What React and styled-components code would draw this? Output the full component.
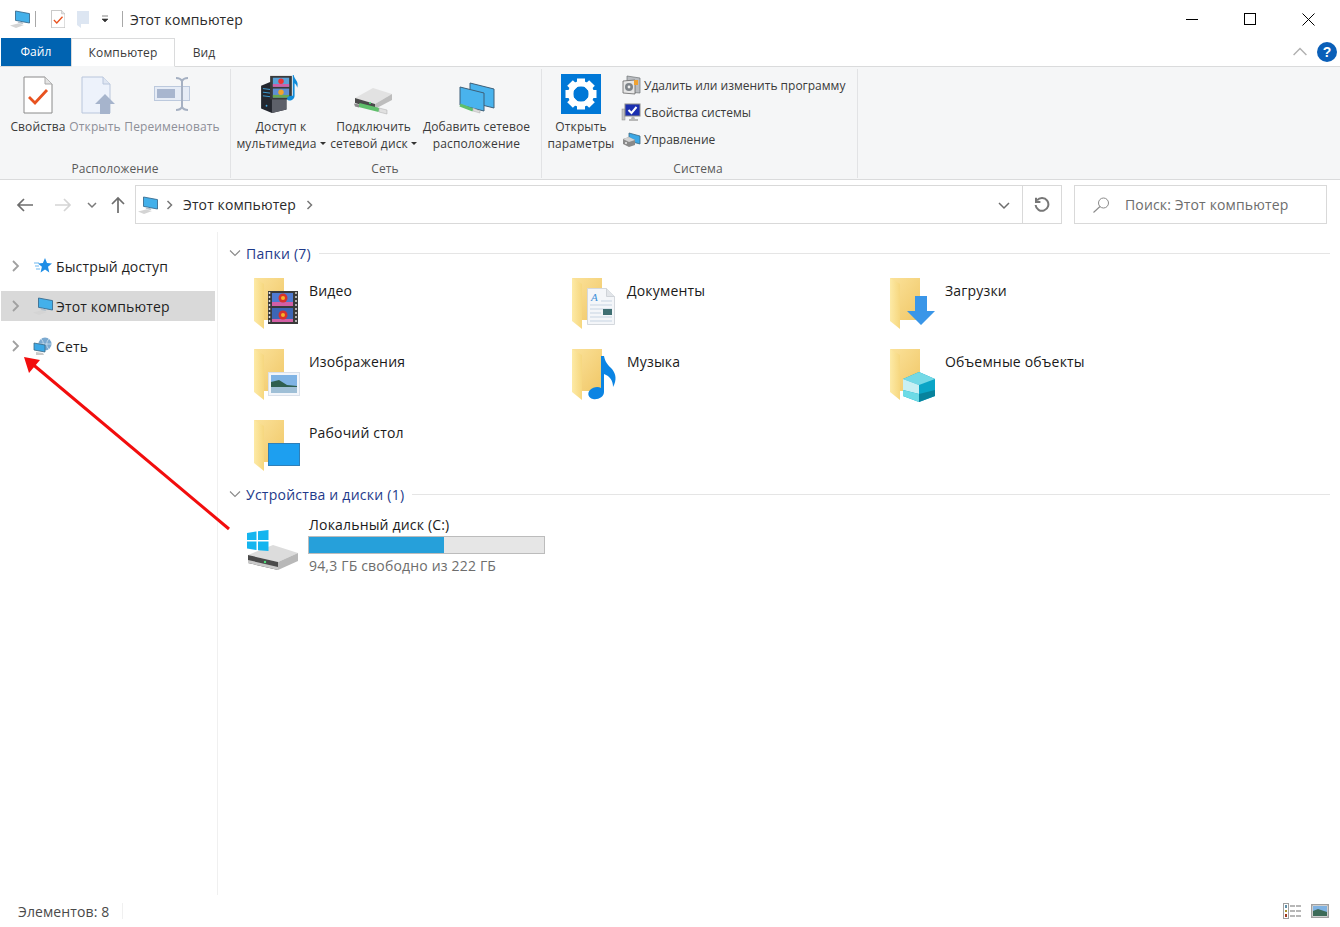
import React from 'react';
import styled, { createGlobalStyle } from 'styled-components';

const Global = createGlobalStyle`
  html, body { margin: 0; padding: 0; background: #fff; }
  body { font-family: "Open Sans", "Noto Sans", sans-serif; color: #1a1a1a; letter-spacing: 0.1px; }
  * { box-sizing: border-box; }
`;

const Window = styled.div`
  position: relative; width: 1340px; height: 927px; overflow: hidden;
  display: flex; flex-direction: column; background: #fff;
`;

/* ---------- title bar ---------- */
const TitleBar = styled.div`
  height: 38px; display: flex; align-items: center; padding: 0 2px 0 10px; flex: none;
`;
const QuickSep = styled.i`
  display: block; width: 1px; height: 16px; background: #a8a8a8; margin: 0 ${p => p.$r}px 0 ${p => p.$l}px;
`;
const QuickGap = styled.i` display: block; width: 11.6px; `;
const Title = styled.span` font-size: 14px; color: #2b2b2b; `;
const Spacer = styled.div` flex: 1; `;
const WinButtons = styled.div` display: flex; align-items: center; height: 38px; `;
const WinButton = styled.div`
  width: 58.5px; height: 38px; display: flex; align-items: center; justify-content: center;
`;

/* ---------- tabs ---------- */
const TabRow = styled.div`
  height: 28px; flex: none; display: flex; align-items: flex-start; padding-left: 1px; position: relative; z-index: 1;
`;
const FileTab = styled.div`
  width: 70px; height: 28px; padding-bottom: 1px; background: #0063b1; color: #fff; font-size: 12px; letter-spacing: 0.1px;
  display: flex; align-items: center; justify-content: center;
`;
const Tab = styled.div`
  width: ${p => p.$w}px; height: 29px; padding-bottom: 1px; font-size: 12px; letter-spacing: 0.15px; color: #3b3b3b;
  display: flex; align-items: center; justify-content: center;
  border: 1px solid ${p => (p.$active ? '#dadbdc' : 'transparent')};
  border-bottom: 1px solid ${p => (p.$active ? '#f5f6f7' : 'transparent')};
  background: ${p => (p.$active ? '#fff' : 'transparent')};
`;
const HelpArea = styled.div`
  margin-left: auto; height: 28px; display: flex; align-items: center; gap: 10px; padding-right: 3px;
`;

/* ---------- ribbon ---------- */
const Ribbon = styled.div`
  height: 114px; flex: none; background: #f5f6f7; display: flex; padding-top: 1px;
  border-top: 1px solid #dadbdc; border-bottom: 1px solid #dadbdc;
`;
const Group = styled.div`
  width: ${p => p.$w}px; height: 109px; margin-top: 1px; flex: none; padding-left: ${p => p.$pad}px;
  border-right: 1px solid #e2e3e5; display: flex; flex-direction: column;
`;
const GroupBody = styled.div` flex: 1; display: flex; `;
const GroupLabel = styled.div`
  height: 16px; margin-left: ${p => -p.$pad}px; padding-right: ${p => p.$nudge || 0}px; margin-bottom: 1px; text-align: center;
  font-size: 12px; letter-spacing: 0.1px; line-height: 16px; color: #5a5a5a;
`;
const RibbonButton = styled.div`
  width: ${p => p.$w}px; display: flex; flex-direction: column; align-items: center;
  font-size: 12px; letter-spacing: 0.12px; line-height: 17px; white-space: nowrap; text-align: center;
  color: ${p => (p.$off ? '#8d8f98' : '#3a3a3a')};
`;
const BigIcon = styled.div`
  height: 49px; width: 100%; display: flex; justify-content: center; align-items: flex-start;
  padding-top: ${p => p.$top}px; padding-left: ${p => p.$left || 0}px;
`;
const Caret = styled.i`
  display: inline-block; width: 0; height: 0; margin-left: 3px; vertical-align: 3px;
  border-left: 3px solid transparent; border-right: 3px solid transparent; border-top: 3px solid #333;
`;
const SmallList = styled.div` display: flex; flex-direction: column; padding: 6px 0 0 5px; gap: 7px; `;
const SmallRow = styled.div`
  height: 20px; display: flex; align-items: center; gap: 3px; font-size: 12px; letter-spacing: 0;
  white-space: nowrap; color: #3a3a3a;
`;
const SmallIcon = styled.div` width: 20px; flex: none; display: flex; justify-content: center; `;

/* ---------- address bar ---------- */
const AddressRow = styled.div`
  height: 52px; flex: none; display: flex; padding: 5px 13px 0 0;
`;
const NavButtons = styled.div`
  width: 135px; height: 39px; flex: none; display: flex; align-items: center;
`;
const NavSlot = styled.div`
  width: ${p => p.$w}px; display: flex; justify-content: center; align-items: center; flex: none;
`;
const AddressBox = styled.div`
  width: 927px; height: 39px; flex: none; border: 1px solid #d9d9d9; display: flex; align-items: center; padding-left: 2px;
  font-size: 14px; color: #2b2b2b;
`;
const CrumbChevron = styled.div` margin-left: 6px; display: flex; `;
const Crumb = styled.span` margin: 0 8px 0 7px; `;
const AddrEnd = styled.div` margin-left: auto; display: flex; height: 100%; align-items: center; `;
const AddrDrop = styled.div`
  width: 38px; height: 100%; display: flex; align-items: center; justify-content: center; border-right: 1px solid #d9d9d9;
`;
const AddrRefresh = styled.div`
  width: 38px; height: 100%; display: flex; align-items: center; justify-content: center;
`;
const SearchBox = styled.div`
  width: 253px; height: 39px; margin-left: 12px; flex: none; border: 1px solid #d9d9d9; display: flex; align-items: center;
  padding-left: 17px; gap: 15px; font-size: 14px; letter-spacing: 0.15px; color: #6d6d6d;
`;

/* ---------- main ---------- */
const Main = styled.div` flex: 1; display: flex; min-height: 0; `;
const Sidebar = styled.nav`
  width: 218px; flex: none; border-right: 1px solid #f0f0f0; padding: 19px 2px 0 1px;
  display: flex; flex-direction: column; gap: 10px;
`;
const NavRow = styled.div`
  width: 214px; height: 30px; display: flex; align-items: center; font-size: 14px; letter-spacing: 0.15px; color: #1f1f1f;
  background: ${p => (p.$selected ? '#d9d9d9' : 'transparent')};
`;
const NavChevron = styled.div` width: 29px; flex: none; padding-left: 9px; display: flex; `;
const NavIcon = styled.div` width: 26px; flex: none; display: flex; justify-content: center; `;

const Content = styled.main` flex: 1; padding: 12px 10px 0 11px; min-width: 0; `;
const SectionHead = styled.div`
  height: 18px; display: flex; align-items: center; font-size: 14px; letter-spacing: 0.25px; color: #1e3a8a;
`;
const SectionChevron = styled.div` width: 17px; flex: none; display: flex; `;
const SectionRule = styled.div` flex: 1; height: 1px; background: #e5e5e5; margin-left: 8px; `;
const FolderGrid = styled.div`
  display: grid; grid-template-columns: repeat(3, 318px); grid-auto-rows: 54px; row-gap: 17px; padding: 15px 0 12px 25px;
`;
const FolderItem = styled.div`
  display: flex; gap: 9px; font-size: 14px; letter-spacing: 0.18px; color: #1a1a1a; line-height: 20px;
`;
const FolderLabel = styled.div` padding-top: 4px; `;
const DriveItem = styled.div` display: flex; padding: 12px 0 0 18px; gap: 10px; `;
const DiskSlot = styled.div` padding-top: 14px; display: flex; `;
const DriveInfo = styled.div` width: 237px; font-size: 14px; letter-spacing: 0.18px; line-height: 20px; color: #1a1a1a; `;
const DriveBar = styled.div`
  height: 18px; margin: 1px 0 2px -1px; width: 237px; background: #e6e6e6; border: 1px solid #bcbcbc;
`;
const DriveFill = styled.div` height: 100%; background: #26a0da; `;
const DriveMeta = styled.div` color: #6d6d6d; margin-top: 1px; white-space: nowrap; `;

/* ---------- status ---------- */
const StatusBar = styled.div`
  height: 32px; flex: none; display: flex; align-items: center; padding: 0 11px 0 18px; font-size: 14px; color: #4a4a4a;
`;
const StatusSep = styled.i` display: block; width: 1px; height: 16px; background: #f0f0f0; margin-left: 13px; `;
const ViewIcons = styled.div` margin-left: auto; display: flex; align-items: center; gap: 10px; `;

const ArrowOverlay = styled.svg` position: absolute; left: 0; top: 0; pointer-events: none; `;

/* ---------- icons ---------- */
const Pc = () => (
  <svg width="20" height="18" viewBox="0 0 20 18">
    <path d="M0 15.5l8-2 6 1.5-8 3z" fill="#d4d4d4" />
    <path d="M5.5 1l14 2.6v9.4l-14-2.6z" fill="#43b0ea" stroke="#3b6d91" strokeWidth=".9" />
    <path d="M9 11.5l5 1-1.5 1.5-5-1z" fill="#b5c1cb" />
  </svg>
);
const CheckDoc = ({ s = 1 }) => (
  <svg width={30 * s} height={38 * s} viewBox="0 0 30 38">
    <path d="M1 1h21l7 7v29H1z" fill="#fff" stroke="#8a8a8a" strokeWidth="1" />
    <path d="M22 1v7h7" fill="#e4e4e4" stroke="#a9a9a9" strokeWidth="1" />
    <path d="M6 21l6 6 12-13" fill="none" stroke="#e8521f" strokeWidth="2.8" />
  </svg>
);
const OpenIcon = () => (
  <svg width="36" height="40" viewBox="0 0 36 40">
    <path d="M1 1h21l7 7v29H1z" fill="#edf2fb" stroke="#b9c6dc" />
    <path d="M22 1v7h7" fill="#dfe6f2" stroke="#b9c6dc" />
    <path d="M24 18l10 10h-5v10h-10V28h-5z" fill="#a6b4cc" />
  </svg>
);
const RenameIcon = () => (
  <svg width="36" height="34" viewBox="0 0 36 34">
    <rect x=".5" y="9.5" width="35" height="14" fill="#e6ecf6" stroke="#bcc9dd" />
    <rect x="3" y="12" width="18" height="9" fill="#a8b6cf" />
    <path d="M22 1c4 0 5 1 6 3 1-2 2-3 6-3M28 4v26M22 33c4 0 5-1 6-3 1 2 2 3 6 3" fill="none" stroke="#a5b0c2" strokeWidth="2" />
  </svg>
);
const MediaIcon = () => (
  <svg width="40" height="38" viewBox="0 0 44 42">
    <path d="M0 12l12-5 16 4v27l-16 4L0 37z" fill="#23262e" />
    <path d="M12 7l16 4v27l-16 4z" fill="#5d6069" />
    <path d="M2 15l8 1M2 19l8 1M2 23l8 1" stroke="#3fa5df" strokeWidth="1" />
    <circle cx="6" cy="34" r="1" fill="#3fa5df" />
    <rect x="10" y="1" width="24" height="26" fill="#3a3a3a" />
    <rect x="13" y="3" width="18" height="10" fill="#5aa2d8" />
    <rect x="13" y="15" width="18" height="10" fill="#5f8fd2" />
    <rect x="13" y="10" width="18" height="3" fill="#d35fa5" />
    <rect x="13" y="22" width="18" height="3" fill="#6aa84f" />
    <circle cx="22" cy="7" r="3" fill="#e33" />
    <circle cx="22" cy="19" r="3" fill="#f1a32a" />
    <path d="M36 0c1 6 6 6 4 14-1-4-2-4-3-5v14c0 4-4 6-7 5-3-2 0-6 5-5V0z" fill="#0f8bd9" />
  </svg>
);
const NetDriveIcon = () => (
  <svg width="42" height="28" viewBox="0 0 42 28">
    <path d="M2 11L20 1l19 6-17 10z" fill="#e2e2e2" />
    <path d="M2 11l20 6v5L2 16z" fill="#4a4a4a" />
    <path d="M22 17L39 7v6L22 22z" fill="#bdbdbd" />
    <circle cx="17" cy="16" r="1" fill="#4fe07a" />
    <path d="M6 18l20 5" stroke="#5fbf6b" strokeWidth="4" />
    <path d="M1 16.5l5 1v3l-4-1z" fill="#8b8b8b" />
    <path d="M26 21l8 2v4l-8-2z" fill="#e0e0e0" stroke="#aaa" strokeWidth=".5" />
  </svg>
);
const NetLocIcon = () => (
  <svg width="36" height="32" viewBox="0 0 36 32">
    <path d="M11 1l24 6v19l-24-6z" fill="#49b3ed" stroke="#3d5f78" />
    <path d="M1 5l24 6v18L1 23z" fill="#49b3ed" stroke="#3d5f78" />
    <path d="M1 23l13 5" stroke="#5fbf6b" strokeWidth="3" />
    <path d="M14 26l7 3v2l-7-2z" fill="#ddd" stroke="#aaa" strokeWidth=".5" />
  </svg>
);
const GearTile = () => (
  <svg width="40" height="40" viewBox="0 0 40 40">
    <rect width="40" height="40" fill="#0078d7" />
    <g fill="#fff">
      {[0, 45, 90, 135, 180, 225, 270, 315].map(a => (
        <rect key={a} x="16" y="4.5" width="8" height="8" transform={`rotate(${a} 20 20)`} />
      ))}
    </g>
    <circle cx="20" cy="20" r="10.5" fill="none" stroke="#fff" strokeWidth="5" />
  </svg>
);
const UninstallIcon = () => (
  <svg width="19" height="20" viewBox="0 0 19 20">
    <path d="M5 1l13 2v15l-13-1z" fill="#b9bcc0" stroke="#6f7276" strokeWidth=".7" />
    <path d="M1 6l12-1v14L1 18z" fill="#e6e6e6" stroke="#666" strokeWidth=".8" />
    <circle cx="7" cy="12" r="4" fill="#7e8489" />
    <circle cx="7" cy="12" r="1.4" fill="#eee" />
    <rect x="12" y="5" width="4" height="5" fill="#f0a232" />
  </svg>
);
const SysPropsIcon = () => (
  <svg width="20" height="19" viewBox="0 0 20 19">
    <rect x="1" y="6" width="3" height="11" fill="#c4c4c4" stroke="#8e8e8e" strokeWidth=".5" />
    <rect x="4" y="1" width="15" height="12" fill="#1b2fb0" stroke="#8b8b8b" />
    <path d="M7.5 7l3 3 5-6" fill="none" stroke="#fff" strokeWidth="2" />
    <path d="M11 13h2l1 3h3v2H8v-2h2z" fill="#b8b8b8" />
  </svg>
);
const ManageIcon = () => (
  <svg width="19" height="17" viewBox="0 0 19 17">
    <path d="M7 2l11 3v8l-11-3z" fill="#3ca8e6" stroke="#3a6782" strokeWidth=".8" />
    <path d="M1 8l6-2 6 3v5l-6 2-6-3z" fill="#8a8a8a" />
    <path d="M1 8l6-2 6 3-6 2z" fill="#d2d2d2" />
    <circle cx="4" cy="12" r="1" fill="#eee" />
  </svg>
);
const Chev = ({ d, c = '#8a8a8a', w = 12, h = 12, sw = 1.5 }) => (
  <svg width={w} height={h} viewBox="0 0 12 12">
    <path d={d} fill="none" stroke={c} strokeWidth={sw} />
  </svg>
);
const ArrowLeft = ({ c }) => (
  <svg width="18" height="14" viewBox="0 0 18 14">
    <path d="M17 7H2M8 1L2 7l6 6" fill="none" stroke={c} strokeWidth="1.7" />
  </svg>
);
const ArrowRight = ({ c }) => (
  <svg width="18" height="14" viewBox="0 0 18 14">
    <path d="M1 7h15M10 1l6 6-6 6" fill="none" stroke={c} strokeWidth="1.7" />
  </svg>
);
const ArrowUp = () => (
  <svg width="14" height="18" viewBox="0 0 14 18">
    <path d="M7 17V2M1 8l6-6 6 6" fill="none" stroke="#6d6d6d" strokeWidth="1.7" />
  </svg>
);
const Refresh = () => (
  <svg width="16" height="16" viewBox="0 0 16 16">
    <path d="M3 3.4A6.4 6.4 0 1 1 1.6 8" fill="none" stroke="#777" strokeWidth="2" />
    <path d="M2 .8v4.2h4.4" fill="none" stroke="#777" strokeWidth="2" />
  </svg>
);
const Lens = () => (
  <svg width="18" height="16" viewBox="0 0 18 16">
    <circle cx="11.5" cy="6" r="5" fill="none" stroke="#8a8a8a" />
    <path d="M8 9.5L1.5 15.5" stroke="#8a8a8a" strokeWidth="1.1" />
  </svg>
);
const QuickStar = () => (
  <svg width="18" height="16" viewBox="0 0 18 16">
    <path d="M11 0l2 5 5 .4-4 3.4 1.3 5.6L11 11.6 6.6 14.4l1.3-5.6-4-3.4 5-.4z" fill="#1f8ee6" />
    <path d="M0 5h5M1 8h4M2 11h4" stroke="#6db7ef" strokeWidth="1" />
  </svg>
);
const Network = () => (
  <svg width="20" height="18" viewBox="0 0 20 18">
    <circle cx="12" cy="7" r="6.5" fill="#7ba9d0" />
    <path d="M8 2c3 2 3 8 0 10M16 2c-3 2-3 8 0 10M6 7h12" stroke="#d5e5f2" strokeWidth=".7" fill="none" />
    <path d="M1 6l11 2v7L1 13z" fill="#3ca8e6" stroke="#3a6782" strokeWidth=".8" />
    <path d="M3 15l7 1 1 2H3z" fill="#c9c9c9" />
  </svg>
);
const HelpIcon = () => (
  <svg width="20" height="20" viewBox="0 0 20 20">
    <circle cx="10" cy="10" r="10" fill="#0a5fb8" />
    <text x="10" y="15" textAnchor="middle" fontFamily="Liberation Sans" fontSize="14" fontWeight="700" fill="#fff">?</text>
  </svg>
);

const FolderBase = ({ children }) => (
  <svg width="46" height="54" viewBox="0 0 46 54">
    <defs>
      <linearGradient id="flap" x1="0" x2="1" y1="0" y2="0">
        <stop offset="0" stopColor="#fdeaa6" />
        <stop offset="1" stopColor="#f6d77f" />
      </linearGradient>
      <linearGradient id="back" x1="0" x2="1" y1="0" y2="1">
        <stop offset="0" stopColor="#fbe29a" />
        <stop offset="1" stopColor="#f0c767" />
      </linearGradient>
    </defs>
    <path d="M0 1h30v42H10z" fill="url(#back)" />
    <path d="M0 1l10 6v45l-10-8z" fill="url(#flap)" />
    {children}
  </svg>
);
const Overlays = {
  video: (
    <>
      <rect x="14" y="14" width="30" height="33" fill="#3a3a3a" />
      <rect x="18" y="16" width="21" height="13" fill="#4f7ad0" />
      <rect x="18" y="31" width="21" height="14" fill="#3d66b5" />
      <rect x="18" y="25" width="21" height="4" fill="#d35fa5" />
      <rect x="18" y="42" width="21" height="3" fill="#d35fa5" />
      <circle cx="29" cy="21" r="4.5" fill="#d7322d" />
      <circle cx="29" cy="21" r="2" fill="#f5b428" />
      <circle cx="29" cy="38" r="4.5" fill="#d7322d" />
      <circle cx="29" cy="38" r="2" fill="#f5b428" />
      <path d="M15.5 15v31M42 15v31" stroke="#ddd" strokeWidth="1.5" strokeDasharray="2 2" />
    </>
  ),
  docs: (
    <>
      <path d="M15.5 11.5h19l8 8v28h-27z" fill="#f4f6f9" stroke="#d4d8dd" />
      <path d="M34.5 11.5v8h8" fill="#e2e5e9" stroke="#cfd3d8" />
      <text x="19" y="24" fontFamily="Liberation Serif" fontStyle="italic" fontSize="11" fill="#3d8fd8">A</text>
      <path d="M29 24h11M18 28h22M18 32h22M18 36h11M18 40h22M18 44h22" stroke="#c7d4e2" />
      <rect x="31" y="32" width="9" height="6" fill="#3f6f72" />
    </>
  ),
  down: <path d="M25 19h12v15h8L31 48 17 34h8z" fill="#3a96e8" />,
  image: (
    <>
      <rect x="14.5" y="24.5" width="31" height="23" fill="#f2f5fa" stroke="#d9e0ea" />
      <rect x="17" y="27" width="26" height="18" fill="#7fb3e4" />
      <path d="M17 34l8-2 8 5 10 1v2H17z" fill="#2f5f4f" />
      <path d="M17 39h26v6H17z" fill="#9fbfd6" />
    </>
  ),
  music: <path d="M29 8h3c1 6 4 9 8 13 4 5 5 11 1 18 0-6-3-11-9-13v18c0 5-6 8-11 7-5-1-6-6-3-9 3-3 8-4 11-2z" fill="#0b84e3" />,
  cube: (
    <>
      <path d="M13 31l16-7 16 7v17l-16 6-16-6z" fill="#0aa5c6" />
      <path d="M13 31l16-7 16 7-16 6z" fill="#74d9e6" />
      <path d="M13 31l16 6v9l-16-4z" fill="#c9eff3" />
      <path d="M13 42l16 4v8l-16-6z" fill="#6ddbe6" />
      <path d="M29 46l16-4v6l-16 6z" fill="#08839d" />
    </>
  ),
  desktop: <rect x="14.5" y="24.5" width="31" height="22" fill="#1d9ff0" stroke="#2f7fb8" />,
};
const DiskIcon = () => (
  <svg width="52" height="42" viewBox="0 0 52 42">
    <path d="M1 26l25-10 25 8-20 9z" fill="#dcdcdc" />
    <path d="M1 26l30 7v8L1 34z" fill="#4a4a4a" />
    <path d="M1 31l30 7v3L1 34z" fill="#c9c9c9" />
    <path d="M31 33l20-9v8l-20 9z" fill="#b8b8b8" />
    <circle cx="18" cy="33" r="1.2" fill="#4fe07a" />
    <path d="M0 4l9.5-1.6v8.6H0zM11 2.2L21.5 1v10H11zM0 12.5h9.5v8.6L0 19.5zM11 12.5h10.5V22L11 21.3z" fill="#15b5ef" />
  </svg>
);
const DetailsView = () => (
  <svg width="18" height="16" viewBox="0 0 18 16">
    <rect x=".5" y=".5" width="5" height="15" fill="#fff" stroke="#a0a0a0" />
    <rect x="2" y="2" width="2" height="3" fill="#5f8fa8" />
    <rect x="2" y="7" width="2" height="2" fill="#a8912a" />
    <rect x="2" y="11" width="2" height="3" fill="#a03a20" />
    <path d="M7 3h5M13 3h5M7 8h5M13 8h5M7 13h5M13 13h5" stroke="#a0a0a0" strokeWidth="1.3" />
  </svg>
);
const LargeView = () => (
  <svg width="18" height="14" viewBox="0 0 18 14">
    <rect x=".75" y=".75" width="16.5" height="12.5" fill="#fff" stroke="#a0a0a0" strokeWidth="1.5" />
    <rect x="2" y="2" width="14" height="10" fill="#7fb2e2" />
    <path d="M2 7l5-2 9 3v4H2z" fill="#3d6b58" />
  </svg>
);

const folders = [
  ['Видео', 'video'], ['Документы', 'docs'], ['Загрузки', 'down'],
  ['Изображения', 'image'], ['Музыка', 'music'], ['Объемные объекты', 'cube'],
  ['Рабочий стол', 'desktop'],
];
const chevR = 'M3.5 2l4 4-4 4';
const navItems = [
  ['Быстрый доступ', <QuickStar key="q" />], ['Этот компьютер', <Pc key="p" />], ['Сеть', <Network key="n" />],
];

export default function App() {
  return (
    <Window>
      <Global />
      <TitleBar>
        <Pc />
        <QuickSep $l={5} $r={15} />
        <CheckDoc s={0.48} />
        <QuickGap />
        <svg width="13" height="18" viewBox="0 0 13 18"><path d="M0 1h12v13H4zM0 1l4 3v14l-4-3z" fill="#dde6f2" /></svg>
        <svg width="32" height="10" viewBox="0 0 32 10"><path d="M12 2h6M12 5h6l-3 3z" fill="#333" stroke="#333" strokeWidth=".6" /></svg>
        <QuickSep $l={0} $r={7} />
        <Title>Этот компьютер</Title>
        <Spacer />
        <WinButtons>
          <WinButton><svg width="12" height="12"><path d="M0 6.5h12" stroke="#000" /></svg></WinButton>
          <WinButton><svg width="12" height="12"><rect x=".5" y=".5" width="11" height="11" fill="none" stroke="#000" /></svg></WinButton>
          <WinButton><svg width="13" height="13"><path d="M.5.5l12 12M12.5.5l-12 12" stroke="#000" /></svg></WinButton>
        </WinButtons>
      </TitleBar>

      <TabRow>
        <FileTab>Файл</FileTab>
        <Tab $w={104} $active>Компьютер</Tab>
        <Tab $w={58}>Вид</Tab>
        <HelpArea>
          <Chev d="M.5 8.5L6 3l5.5 5.5" c="#b0b0b0" w={14} h={14} sw={1.2} />
          <HelpIcon />
        </HelpArea>
      </TabRow>

      <Ribbon>
        <Group $w={231} $pad={8}>
          <GroupBody>
            <RibbonButton $w={60}><BigIcon $top={7}><CheckDoc /></BigIcon>Свойства</RibbonButton>
            <RibbonButton $w={54} $off><BigIcon $top={7} $left={7}><OpenIcon /></BigIcon>Открыть</RibbonButton>
            <RibbonButton $w={100} $off><BigIcon $top={8}><RenameIcon /></BigIcon>Переименовать</RibbonButton>
          </GroupBody>
          <GroupLabel $pad={8}>Расположение</GroupLabel>
        </Group>
        <Group $w={311} $pad={1}>
          <GroupBody>
            <RibbonButton $w={98}><BigIcon $top={6}><MediaIcon /></BigIcon>Доступ к<span>мультимедиа<Caret /></span></RibbonButton>
            <RibbonButton $w={87}><BigIcon $top={18}><NetDriveIcon /></BigIcon>Подключить<span>сетевой диск<Caret /></span></RibbonButton>
            <RibbonButton $w={119}><BigIcon $top={13}><NetLocIcon /></BigIcon>Добавить сетевое<span>расположение</span></RibbonButton>
          </GroupBody>
          <GroupLabel $pad={1} $nudge={2}>Сеть</GroupLabel>
        </Group>
        <Group $w={316} $pad={4}>
          <GroupBody>
            <RibbonButton $w={70}><BigIcon $top={5}><GearTile /></BigIcon>Открыть<span>параметры</span></RibbonButton>
            <SmallList>
              <SmallRow><SmallIcon><UninstallIcon /></SmallIcon>Удалить или изменить программу</SmallRow>
              <SmallRow><SmallIcon><SysPropsIcon /></SmallIcon>Свойства системы</SmallRow>
              <SmallRow><SmallIcon><ManageIcon /></SmallIcon>Управление</SmallRow>
            </SmallList>
          </GroupBody>
          <GroupLabel $pad={4} $nudge={3}>Система</GroupLabel>
        </Group>
      </Ribbon>

      <AddressRow>
        <NavButtons>
          <NavSlot $w={50}><ArrowLeft c="#6d6d6d" /></NavSlot>
          <NavSlot $w={26}><ArrowRight c="#d5d5d5" /></NavSlot>
          <NavSlot $w={32}><Chev d="M2 4l4 4 4-4" c="#7a7a7a" /></NavSlot>
          <NavSlot $w={20}><ArrowUp /></NavSlot>
        </NavButtons>
        <AddressBox>
          <Pc />
          <CrumbChevron><Chev d={chevR} c="#777" /></CrumbChevron>
          <Crumb>Этот компьютер</Crumb>
          <Chev d={chevR} c="#777" />
          <AddrEnd>
            <AddrDrop><Chev d="M1 4l5 5 5-5" c="#6d6d6d" /></AddrDrop>
            <AddrRefresh><Refresh /></AddrRefresh>
          </AddrEnd>
        </AddressBox>
        <SearchBox><Lens />Поиск: Этот компьютер</SearchBox>
      </AddressRow>

      <Main>
        <Sidebar>
          {navItems.map(([label, icon], i) => (
            <NavRow key={label} $selected={i === 1}>
              <NavChevron><Chev d="M3 1l5 5-5 5" c="#a0a0a0" sw={1.8} /></NavChevron>
              <NavIcon>{icon}</NavIcon>
              {label}
            </NavRow>
          ))}
        </Sidebar>
        <Content>
          <SectionHead>
            <SectionChevron><Chev d="M1 3.5l5 5 5-5" c="#8a8a8a" sw={1.1} /></SectionChevron>
            Папки (7)
            <SectionRule />
          </SectionHead>
          <FolderGrid>
            {folders.map(([label, key]) => (
              <FolderItem key={label}>
                <FolderBase>{Overlays[key]}</FolderBase>
                <FolderLabel>{label}</FolderLabel>
              </FolderItem>
            ))}
          </FolderGrid>
          <SectionHead>
            <SectionChevron><Chev d="M1 3.5l5 5 5-5" c="#8a8a8a" sw={1.1} /></SectionChevron>
            Устройства и диски (1)
            <SectionRule />
          </SectionHead>
          <DriveItem>
            <DiskSlot><DiskIcon /></DiskSlot>
            <DriveInfo>
              Локальный диск (C:)
              <DriveBar><DriveFill style={{ width: `${(1 - 94.3 / 222) * 100}%` }} /></DriveBar>
              <DriveMeta>94,3 ГБ свободно из 222 ГБ</DriveMeta>
            </DriveInfo>
          </DriveItem>
        </Content>
      </Main>

      <StatusBar>
        Элементов: 8
        <StatusSep />
        <ViewIcons><DetailsView /><LargeView /></ViewIcons>
      </StatusBar>

      <ArrowOverlay width="1340" height="927" viewBox="0 0 1340 927">
        <path d="M229 529L30 362" stroke="#f20d0d" strokeWidth="3" fill="none" />
        <path d="M24 357l16 3-11 13z" fill="#f20d0d" />
      </ArrowOverlay>
    </Window>
  );
}
